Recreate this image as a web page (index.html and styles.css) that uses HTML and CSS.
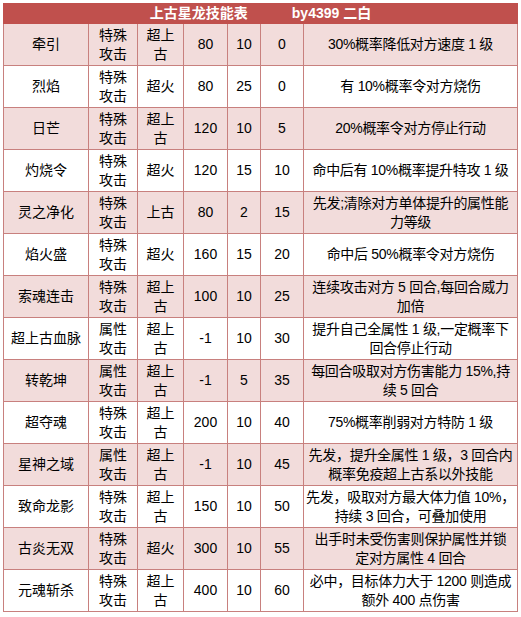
FILE: index.html
```html
<!DOCTYPE html>
<html lang="zh">
<head>
<meta charset="utf-8">
<title>上古星龙技能表</title>
<link rel="stylesheet" href="styles.css">
</head>
<body>
<div class="page">
<table class="skills">
<colgroup>
<col class="c1"><col class="c2"><col class="c3"><col class="c4"><col class="c5"><col class="c6"><col class="c7">
</colgroup>
<thead>
<tr><th colspan="7" class="title"><span>上古星龙技能表</span><span class="by">by4399 二白</span></th></tr>
</thead>
<tbody>
<tr class="pink"><td>牵引</td><td>特殊<br>攻击</td><td>超上<br>古</td><td>80</td><td>10</td><td>0</td><td class="desc">30%概率降低对方速度 1 级</td></tr>
<tr><td>烈焰</td><td>特殊<br>攻击</td><td>超火</td><td>80</td><td>25</td><td>0</td><td class="desc">有 10%概率令对方烧伤</td></tr>
<tr class="pink"><td>日芒</td><td>特殊<br>攻击</td><td>超上<br>古</td><td>120</td><td>10</td><td>5</td><td class="desc">20%概率令对方停止行动</td></tr>
<tr><td>灼烧令</td><td>特殊<br>攻击</td><td>超火</td><td>120</td><td>15</td><td>10</td><td class="desc">命中后有 10%概率提升特攻 1 级</td></tr>
<tr class="pink"><td>灵之净化</td><td>特殊<br>攻击</td><td>上古</td><td>80</td><td>2</td><td>15</td><td class="desc">先发;清除对方单体提升的属性能<br>力等级</td></tr>
<tr><td>焰火盛</td><td>特殊<br>攻击</td><td>超火</td><td>160</td><td>15</td><td>20</td><td class="desc">命中后 50%概率令对方烧伤</td></tr>
<tr class="pink"><td>索魂连击</td><td>特殊<br>攻击</td><td>超上<br>古</td><td>100</td><td>10</td><td>25</td><td class="desc">连续攻击对方 5 回合,每回合威力<br>加倍</td></tr>
<tr><td>超上古血脉</td><td>属性<br>攻击</td><td>超上<br>古</td><td>-1</td><td>10</td><td>30</td><td class="desc">提升自己全属性 1 级,一定概率下<br>回合停止行动</td></tr>
<tr class="pink"><td>转乾坤</td><td>属性<br>攻击</td><td>超上<br>古</td><td>-1</td><td>5</td><td>35</td><td class="desc">每回合吸取对方伤害能力 15%,持<br>续 5 回合</td></tr>
<tr><td>超夺魂</td><td>特殊<br>攻击</td><td>超上<br>古</td><td>200</td><td>10</td><td>40</td><td class="desc">75%概率削弱对方特防 1 级</td></tr>
<tr class="pink"><td>星神之域</td><td>属性<br>攻击</td><td>超上<br>古</td><td>-1</td><td>10</td><td>45</td><td class="desc">先发，提升全属性 1 级，3 回合内<br>概率免疫超上古系以外技能</td></tr>
<tr><td>致命龙影</td><td>特殊<br>攻击</td><td>超上<br>古</td><td>150</td><td>10</td><td>50</td><td class="desc">先发，吸取对方最大体力值 10%，<br>持续 3 回合，可叠加使用</td></tr>
<tr class="pink"><td>古炎无双</td><td>特殊<br>攻击</td><td>超火</td><td>300</td><td>10</td><td>55</td><td class="desc">出手时未受伤害则保护属性并锁<br>定对方属性 4 回合</td></tr>
<tr><td>元魂斩杀</td><td>特殊<br>攻击</td><td>超上<br>古</td><td>400</td><td>10</td><td>60</td><td class="desc">必中，目标体力大于 1200 则造成<br>额外 400 点伤害</td></tr>
</tbody>
</table>
</div>
</body>
</html>
```
FILE: styles.css
```css
html, body {
  margin: 0;
  padding: 0;
  background: #ffffff;
}
.page {
  padding: 3px;
}
.skills {
  border-collapse: collapse;
  table-layout: fixed;
  width: 514px;
  font-family: "Liberation Sans", "Noto Sans CJK SC", sans-serif;
  font-size: 14px;
  line-height: 19px;
  color: #000000;
}
.c1 { width: 85px; }
.c2 { width: 49px; }
.c3 { width: 46px; }
.c4 { width: 44px; }
.c5 { width: 33px; }
.c6 { width: 43px; }
.c7 { width: 214px; }
.skills th,
.skills td {
  border: 1px solid #c8807e;
  padding: 0 2px;
  text-align: center;
  vertical-align: middle;
  white-space: nowrap;
  overflow: hidden;
}
.skills td {
  height: 41px;
  box-sizing: border-box;
}
.skills tbody tr {
  height: 42px;
}
.skills .title {
  background: #c0504d;
  color: #ffffff;
  font-weight: bold;
  font-size: 14px;
  height: 19px;
  line-height: 19px;
  padding: 0;
  border-color: #c0504d;
}
.title .by {
  margin-left: 44px;
}
.pink td {
  background: #f2dcdb;
}
.skills td.desc {
  padding: 0;
  letter-spacing: -0.3px;
}
```
